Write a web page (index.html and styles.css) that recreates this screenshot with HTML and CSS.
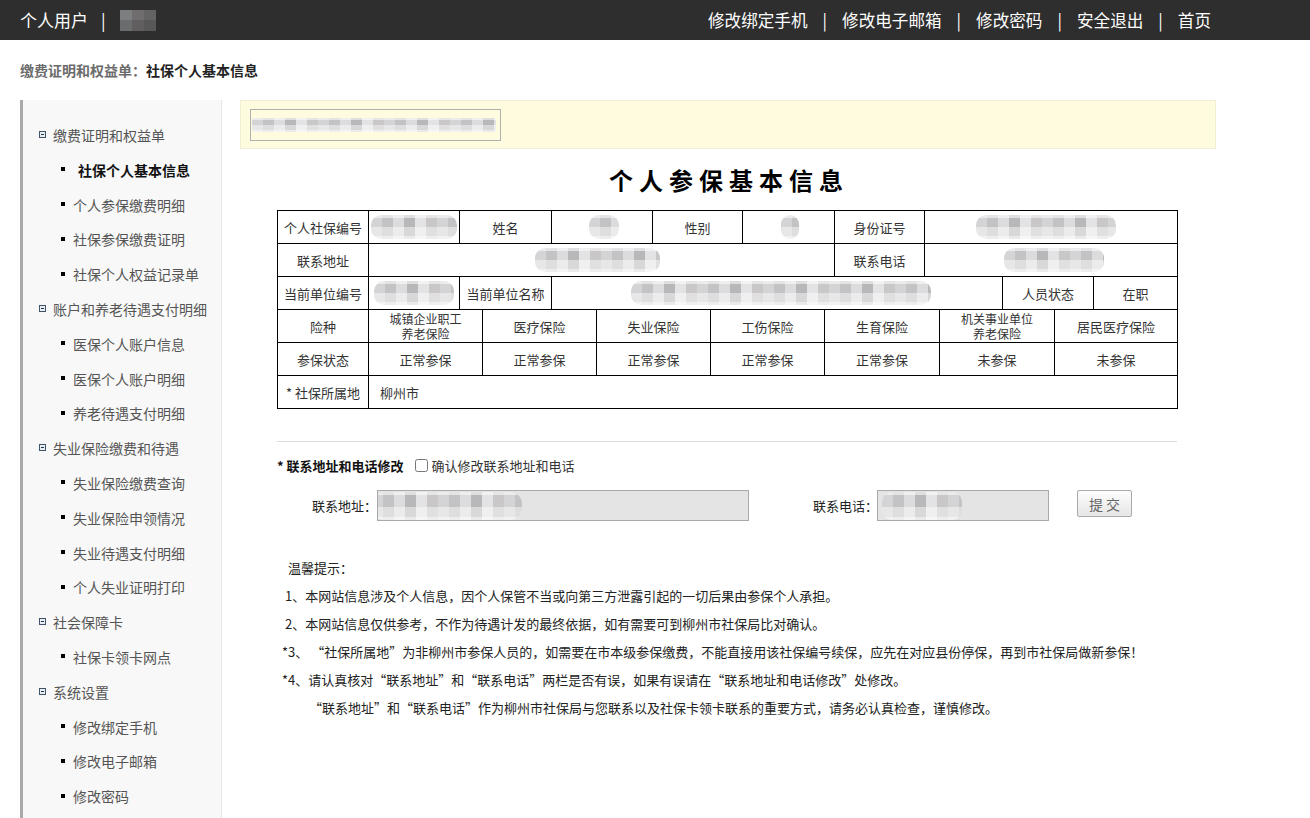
FILE: index.html
```html
<!DOCTYPE html>
<html lang="zh-CN">
<head>
<meta charset="utf-8">
<title>个人参保基本信息</title>
<link rel="stylesheet" href="styles.css">
</head>
<body>
<header class="topbar">
  <div class="user">
    <span>个人用户</span><span class="sep">|</span><span class="mosaic-dark"></span>
  </div>
  <nav class="topnav">
    <a href="#">修改绑定手机</a><span class="sep">|</span>
    <a href="#">修改电子邮箱</a><span class="sep">|</span>
    <a href="#">修改密码</a><span class="sep">|</span>
    <a href="#">安全退出</a><span class="sep">|</span>
    <a href="#">首页</a>
  </nav>
</header>

<div class="crumb"><span class="crumb-parent">缴费证明和权益单：</span><span class="crumb-cur">社保个人基本信息</span></div>

<div class="layout">
  <aside class="sidebar">
    <ul class="menu">
      <li class="group"><i class="tog"></i>缴费证明和权益单</li>
      <li class="item active"><i class="dot"></i>社保个人基本信息</li>
      <li class="item"><i class="dot"></i>个人参保缴费明细</li>
      <li class="item"><i class="dot"></i>社保参保缴费证明</li>
      <li class="item"><i class="dot"></i>社保个人权益记录单</li>
      <li class="group"><i class="tog"></i>账户和养老待遇支付明细</li>
      <li class="item"><i class="dot"></i>医保个人账户信息</li>
      <li class="item"><i class="dot"></i>医保个人账户明细</li>
      <li class="item"><i class="dot"></i>养老待遇支付明细</li>
      <li class="group"><i class="tog"></i>失业保险缴费和待遇</li>
      <li class="item"><i class="dot"></i>失业保险缴费查询</li>
      <li class="item"><i class="dot"></i>失业保险申领情况</li>
      <li class="item"><i class="dot"></i>失业待遇支付明细</li>
      <li class="item"><i class="dot"></i>个人失业证明打印</li>
      <li class="group"><i class="tog"></i>社会保障卡</li>
      <li class="item"><i class="dot"></i>社保卡领卡网点</li>
      <li class="group"><i class="tog"></i>系统设置</li>
      <li class="item"><i class="dot"></i>修改绑定手机</li>
      <li class="item"><i class="dot"></i>修改电子邮箱</li>
      <li class="item"><i class="dot"></i>修改密码</li>
    </ul>
  </aside>

  <main class="main">
    <div class="notice">
      <div class="notice-box"><span class="mosaic m-notice"></span></div>
    </div>

    <h1 class="title">个人参保基本信息</h1>

    <div class="inner">
      <div class="tbl">
        <div class="row r1">
          <div class="c">个人社保编号</div>
          <div class="c"><span class="mosaic m-86"></span></div>
          <div class="c">姓名</div>
          <div class="c"><span class="mosaic m-26"></span></div>
          <div class="c">性别</div>
          <div class="c"><span class="mosaic m-16"></span></div>
          <div class="c">身份证号</div>
          <div class="c"><span class="mosaic m-130"></span></div>
        </div>
        <div class="row r2">
          <div class="c">联系地址</div>
          <div class="c"><span class="mosaic m-120"></span></div>
          <div class="c">联系电话</div>
          <div class="c"><span class="mosaic m-96"></span></div>
        </div>
        <div class="row r3">
          <div class="c">当前单位编号</div>
          <div class="c"><span class="mosaic m-78"></span></div>
          <div class="c">当前单位名称</div>
          <div class="c"><span class="mosaic m-300"></span></div>
          <div class="c">人员状态</div>
          <div class="c">在职</div>
        </div>
        <div class="row r4">
          <div class="c">险种</div>
          <div class="c two">城镇企业职工<br>养老保险</div>
          <div class="c">医疗保险</div>
          <div class="c">失业保险</div>
          <div class="c">工伤保险</div>
          <div class="c">生育保险</div>
          <div class="c two">机关事业单位<br>养老保险</div>
          <div class="c">居民医疗保险</div>
        </div>
        <div class="row r4">
          <div class="c">参保状态</div>
          <div class="c">正常参保</div>
          <div class="c">正常参保</div>
          <div class="c">正常参保</div>
          <div class="c">正常参保</div>
          <div class="c">正常参保</div>
          <div class="c">未参保</div>
          <div class="c">未参保</div>
        </div>
        <div class="row r6">
          <div class="c">* 社保所属地</div>
          <div class="c left">柳州市</div>
        </div>
      </div>

      <div class="divider"></div>

      <div class="edit-head">
        <strong>* 联系地址和电话修改</strong>
        <label class="confirm"><input type="checkbox">确认修改联系地址和电话</label>
      </div>

      <div class="edit-row">
        <span class="lbl">联系地址：</span>
        <div class="field f-addr"><span class="mosaic m-in1"></span></div>
        <span class="lbl lbl-phone">联系电话：</span>
        <div class="field f-phone"><span class="mosaic m-in2"></span></div>
        <button class="btn" type="button">提 交</button>
      </div>

      <div class="notes">
        <p class="n-head">温馨提示：</p>
        <p class="n1">1、本网站信息涉及个人信息，因个人保管不当或向第三方泄露引起的一切后果由参保个人承担。</p>
        <p class="n1">2、本网站信息仅供参考，不作为待遇计发的最终依据，如有需要可到柳州市社保局比对确认。</p>
        <p>*3、 “社保所属地”为非柳州市参保人员的，如需要在市本级参保缴费，不能直接用该社保编号续保，应先在对应县份停保，再到市社保局做新参保！</p>
        <p>*4、请认真核对“联系地址”和“联系电话”两栏是否有误，如果有误请在“联系地址和电话修改”处修改。</p>
        <p class="n-sub">“联系地址”和“联系电话”作为柳州市社保局与您联系以及社保卡领卡联系的重要方式，请务必认真检查，谨慎修改。</p>
      </div>
    </div>
  </main>
</div>
</body>
</html>
```

FILE: styles.css
```css
* { box-sizing: border-box; }

html, body {
  margin: 0;
  padding: 0;
  background: #fff;
}

body {
  font-family: "Noto Sans CJK SC", "Liberation Sans", sans-serif;
  font-size: 13px;
  color: #333;
  overflow: hidden;
}

a { color: inherit; text-decoration: none; }

/* ---------- top bar ---------- */
.topbar {
  height: 40px;
  background: #2e2e2e;
  color: #fff;
  display: flex;
  align-items: center;
  justify-content: space-between;
  padding: 0 99px 0 20px;
  font-size: 17px;
  line-height: 20px;
}

.user, .topnav {
  display: flex;
  align-items: center;
}

.user .sep { margin: 0 14px 0 13px; }

.topnav { font-size: 16.6px; }

.topnav .sep { margin: 0 15px 0 15px; }

.mosaic-dark {
  display: inline-block;
  width: 36px;
  height: 21px;
  background:
    linear-gradient(180deg, rgba(46,46,46,0.15) 0 50%, rgba(46,46,46,0.35) 50% 100%),
    linear-gradient(90deg, #8a8d8f 0 12px, #7b7879 12px 24px, #6d6d6e 24px 36px);
  filter: blur(0.4px);
}

/* ---------- breadcrumb ---------- */
.crumb {
  height: 60px;
  line-height: 60px;
  padding-left: 20px;
  font-size: 14px;
  font-weight: bold;
}

.crumb-parent { color: #6b6b6b; }
.crumb-cur { color: #222; }

/* ---------- layout ---------- */
.layout {
  display: flex;
  align-items: flex-start;
  padding-left: 20px;
  gap: 18px;
}

/* ---------- sidebar ---------- */
.sidebar {
  width: 202px;
  min-height: 740px;
  background: #f8f8f8;
  border-left: 3px solid #aaaaaa;
  border-right: 1px solid #e6e6e6;
}

.menu {
  list-style: none;
  margin: 0;
  padding: 18px 0 0 0;
  font-size: 14px;
  color: #555;
}

.menu li {
  height: 34.8px;
  line-height: 34.8px;
  display: flex;
  align-items: center;
  white-space: nowrap;
}

.group { padding-left: 16px; }

.tog {
  width: 7px;
  height: 7px;
  border: 1px solid #3f5468;
  background: #e9eef3;
  margin-right: 7px;
  position: relative;
  margin-top: -2px;
}

.tog::after {
  content: "";
  position: absolute;
  left: 1px;
  top: 2px;
  width: 3px;
  height: 1px;
  background: #23384c;
}

.item { padding-left: 38px; }

.dot {
  width: 4px;
  height: 4px;
  background: #000;
  margin-right: 8px;
  margin-top: -2px;
}

.item.active {
  font-weight: bold;
  color: #111;
}

.item.active .dot { margin-right: 13px; }

/* ---------- main ---------- */
.main {
  width: 976px;
}

.notice {
  height: 49px;
  background: #fefbdf;
  border: 1px solid #f1eed6;
  padding: 8px 0 0 9px;
}

.notice-box {
  width: 251px;
  height: 32px;
  border: 1px solid #b0b0b0;
  display: flex;
  align-items: center;
  padding-left: 1px;
}

.title {
  margin: 15px 0 14px 0;
  height: 32px;
  line-height: 32px;
  text-align: center;
  font-size: 24px;
  font-weight: bold;
  letter-spacing: 6px;
  padding-left: 2px;
  color: #000;
}

.inner {
  margin-left: 37px;
  width: 901px;
}

/* ---------- info table ---------- */
.tbl {
  border-top: 1px solid #000;
  border-left: 1px solid #000;
  width: 901px;
}

.row { display: grid; }

.r1 { grid-template-columns: 91px 91px 92px 101px 90px 92px 90px 253px; }
.r2 { grid-template-columns: 91px 466px 90px 253px; }
.r3 { grid-template-columns: 91px 91px 92px 451px 91px 84px; }
.r4 { grid-template-columns: 91px 114px 114px 114px 114px 115px 115px 123px; }
.r6 { grid-template-columns: 91px 809px; }

.c {
  height: 33px;
  border-right: 1px solid #000;
  border-bottom: 1px solid #000;
  display: flex;
  align-items: center;
  justify-content: center;
  text-align: center;
  font-size: 13px;
  line-height: 15px;
  color: #333;
  white-space: nowrap;
  overflow: hidden;
}

.c.two {
  font-size: 12px;
  line-height: 15px;
}

.c.left {
  justify-content: flex-start;
  padding-left: 11px;
}

/* redacted (blurred) values */
.mosaic {
  display: inline-block;
  height: 24px;
  border-radius: 10px;
  background-color: #ededed;
  background-image:
    linear-gradient(180deg, rgba(255,255,255,0.55) 0 12%, rgba(255,255,255,0) 12% 52%, rgba(255,255,255,0.45) 52% 88%, rgba(255,255,255,0.7) 88%),
    repeating-linear-gradient(90deg, #d4d4d6 0 11px, #c3c3c5 11px 22px, #dcdcde 22px 33px, #b8b8ba 33px 44px, #e3e3e5 44px 55px, #c9c7c8 55px 66px);
  filter: blur(0.5px);
}

.m-86 { width: 86px; }
.m-26 { width: 30px; margin-left: 4px; }
.m-16 { width: 18px; margin-left: 2px; }
.m-130 { width: 140px; margin-left: -10px; }
.m-120 { width: 125px; margin-left: -8px; }
.m-96 { width: 100px; margin-left: 6px; }
.m-78 { width: 80px; }
.m-300 { width: 300px; margin-left: 8px; }
.m-notice { width: 244px; height: 14px; border-radius: 2px; }
.m-in1 { width: 150px; height: 28px; border-radius: 12px; margin-left: -6px; }
.m-in2 { width: 80px; height: 28px; border-radius: 10px; margin-left: 4px; }

.divider {
  margin-top: 32px;
  height: 1px;
  background: #dcdcdc;
  width: 900px;
}

/* ---------- edit form ---------- */
.edit-head {
  margin-top: 11px;
  height: 24px;
  display: flex;
  align-items: center;
  font-size: 13px;
  color: #222;
}

.edit-head strong { font-weight: bold; color: #111; }

.confirm {
  display: flex;
  align-items: center;
  margin-left: 11px;
  color: #333;
}

.confirm input {
  width: 13px;
  height: 13px;
  margin: 0 4px 0 0;
}

.edit-row {
  margin-top: 13px;
  display: flex;
  align-items: center;
  padding-left: 35px;
  height: 31px;
}

.lbl {
  font-size: 13px;
  color: #222;
  white-space: nowrap;
  width: 65px;
}

.lbl-phone { margin-left: 64px; }

.field {
  height: 31px;
  background: #e4e4e4;
  border: 1px solid #a9a9a9;
  display: flex;
  align-items: center;
  overflow: hidden;
}

.f-addr { width: 372px; }
.f-phone { width: 172px; margin-left: -1px; }

.btn {
  align-self: flex-start;
  margin-left: 28px;
  width: 55px;
  height: 27px;
  padding: 0;
  font-family: inherit;
  font-size: 14px;
  color: #666;
  background: linear-gradient(180deg, #fdfdfd 0%, #e6e6e6 100%);
  border: 1px solid #aaa;
  border-radius: 2px;
}

/* ---------- notes ---------- */
.notes {
  margin-top: 33px;
  font-size: 13px;
  color: #222;
  padding-left: 5px;
}

.notes p {
  margin: 0;
  height: 28px;
  line-height: 28px;
  white-space: nowrap;
}

.n-head { padding-left: 6px; }
.n1 { padding-left: 3px; }
.n-sub { padding-left: 27px; }
```
